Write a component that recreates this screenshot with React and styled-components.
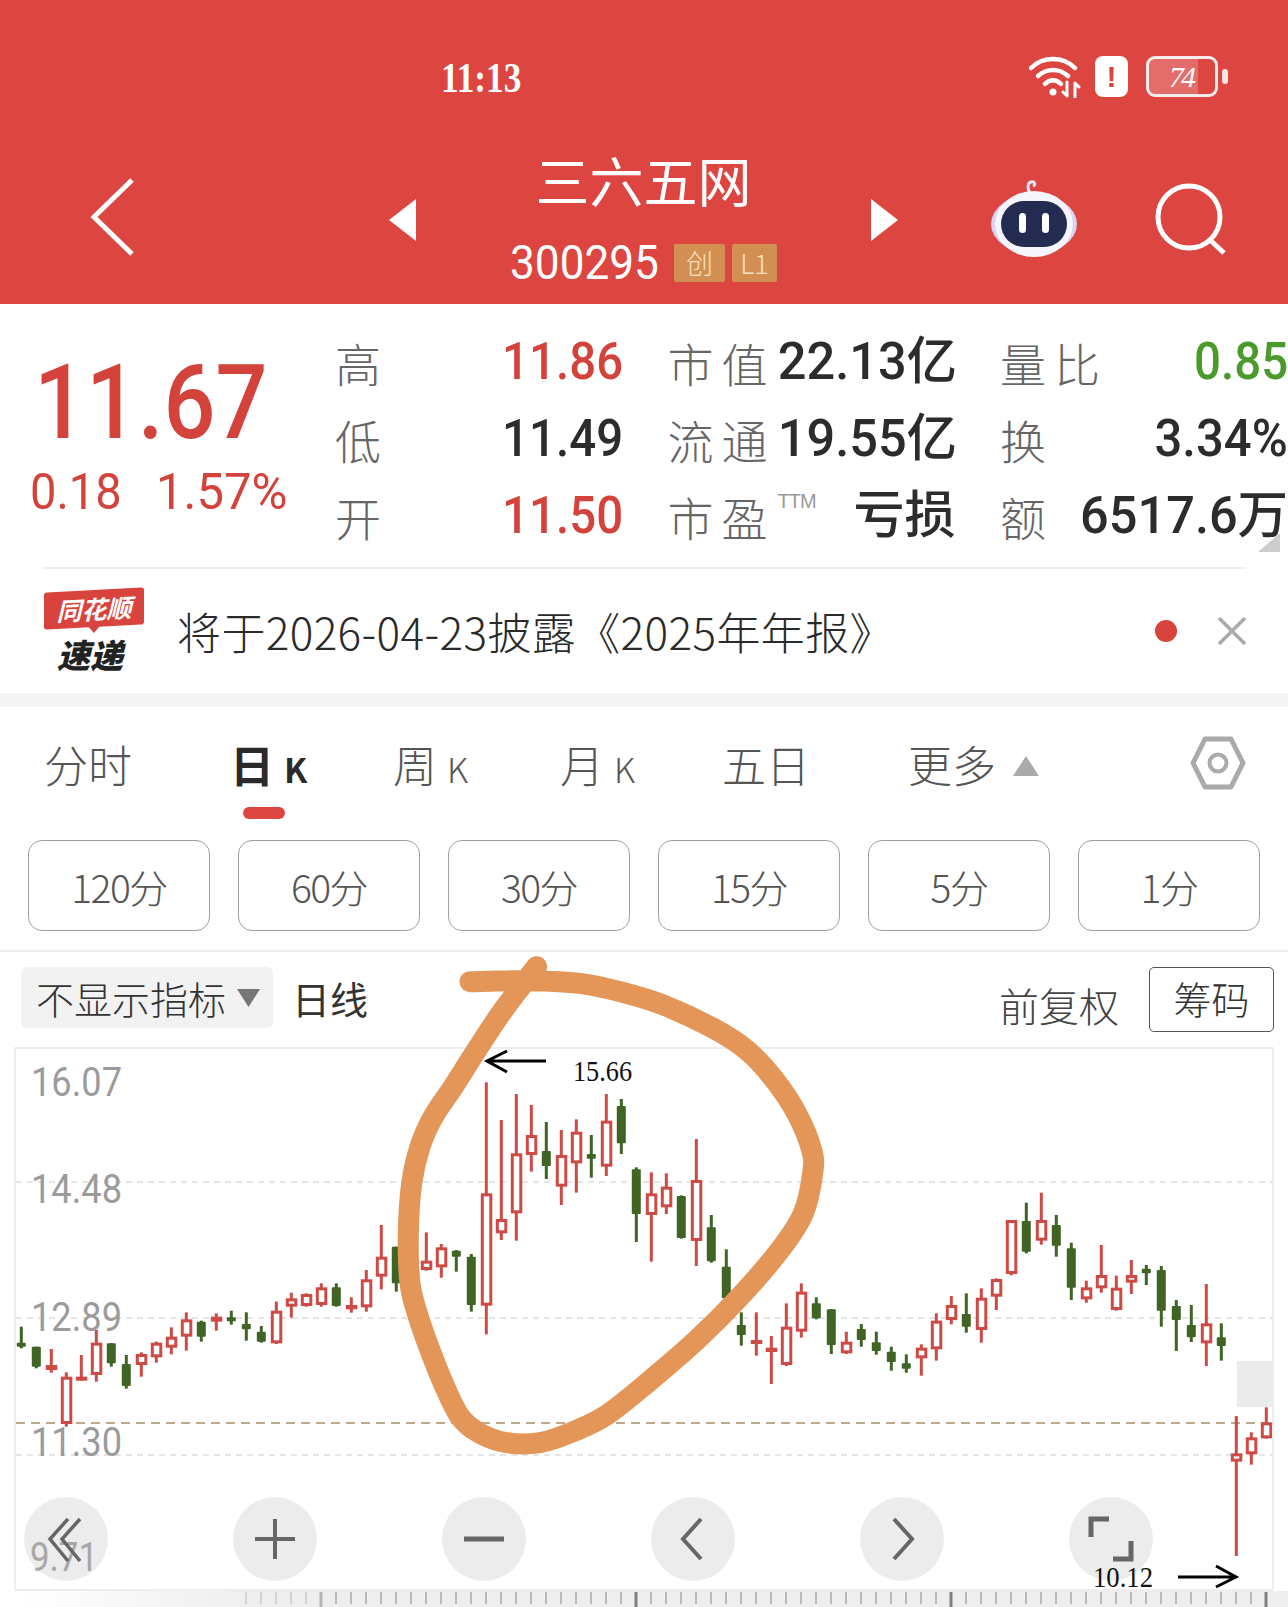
import React from "react"
import styled, { createGlobalStyle } from "styled-components"

const NUM_FONT = `"Roboto", "Noto Sans CJK SC", sans-serif`
const CJK_FONT = `"Noto Sans CJK SC", "Liberation Sans", sans-serif`
const RED = "#dc4540"
const PRICE_RED = "#d4423c"
const GREEN_TEXT = "#4a9a2c"
const CANDLE_RED = "#cd4a45"
const CANDLE_GREEN = "#3f6424"

const Global = createGlobalStyle`
  html, body { margin: 0; padding: 0; background: #fff; }
  * { box-sizing: border-box; }
`

const Page = styled.div`
  position: relative;
  width: 1288px;
  height: 1607px;
  overflow: hidden;
  background: #fff;
  font-family: ${CJK_FONT};
`

// digits in the reference are a narrow face, so squeeze them
const Narrow = styled.span`
  display: inline-block;
  white-space: nowrap;
  transform: scaleX(${(p) => p.$x || 0.93});
  transform-origin: ${(p) => p.$origin || "right"} center;
`

/* header */
const Header = styled.header`
  height: 304px;
  background: ${RED};
  color: #fff;
`
const StatusBar = styled.div`
  height: 150px;
  padding: 56px 70px 0 441px;
  display: flex;
  justify-content: space-between;
  align-items: flex-start;
`
const Time = styled(Narrow)`
  font: 700 42px/41px "Liberation Serif", serif;
  width: 107px;
  margin-top: 2px;
`
const StatusIcons = styled.div`
  display: flex;
  align-items: center;
  height: 41px;
  gap: 14px;
`
const AlertBadge = styled.div`
  width: 33px;
  height: 41px;
  margin-right: 4px;
  border-radius: 8px;
  background: #fff;
  color: ${RED};
  font: 900 30px/41px "Liberation Sans", sans-serif;
  text-align: center;
`
const Battery = styled.div`
  position: relative;
  width: 72px;
  height: 41px;
  border: 3px solid rgba(255, 255, 255, 0.9);
  border-radius: 9px;
  overflow: visible;
  &::after {
    content: "";
    position: absolute;
    right: -13px;
    top: 10px;
    width: 6px;
    height: 15px;
    border-radius: 3px;
    background: rgba(255, 255, 255, 0.85);
  }
`
const BatteryFill = styled.div`
  height: 100%;
  border-radius: 5px 0 0 5px;
  background: rgba(255, 255, 255, 0.22);
  color: #fff;
  padding-left: 20px;
  letter-spacing: -3px;
  font: italic 400 30px/35px "Liberation Serif", serif;
`
const NavBar = styled.div`
  display: grid;
  grid-template-columns: 389px 27px 455px 27px 1fr;
  align-items: center;
  height: 154px;
`
const BackCell = styled.div`
  padding-left: 88px;
  display: flex;
  margin-top: -20px;
`
const NavArrow = styled.svg`
  display: block;
  margin-top: -14px;
`
const TitleBlock = styled.div`
  display: flex;
  flex-direction: column;
  align-items: center;
  margin-top: -21px;
`
const Title = styled.div`
  font-size: 54px;
  line-height: 66px;
  font-weight: 400;
`
const CodeRow = styled.div`
  display: flex;
  align-items: center;
  height: 46px;
  gap: 7px;
  margin-top: 27px;
`
const Code = styled(Narrow)`
  font: 400 48px/46px ${NUM_FONT};
  transform-origin: left center;
  width: 157px;
`
const Tag = styled.span`
  width: ${(p) => p.$w}px;
  height: 38px;
  border-radius: 2px;
  background: #d38f52;
  color: #f7e3c4;
  font-size: 27px;
  font-weight: 300;
  line-height: 38px;
  text-align: center;
`
const NavTools = styled.div`
  display: flex;
  align-items: center;
  gap: 78px;
  padding-left: 93px;
  margin-top: -16px;
`

/* quote */
const Quote = styled.section`
  height: 263px;
  padding-top: 19px;
  display: flex;
  position: relative;
`
const PriceBlock = styled.div`
  width: 335px;
  padding-left: 30px;
`
const Price = styled(Narrow)`
  font: 500 104px/104px ${NUM_FONT};
  color: ${PRICE_RED};
  transform-origin: left center;
  margin: 28px 0 0 4px;
  display: block;
`
const Change = styled.div`
  display: flex;
  gap: 40px;
  font: 400 50px/50px ${NUM_FONT};
  color: ${PRICE_RED};
  margin-top: 12px;
  height: 50px;
`
const ChangeItem = styled(Narrow)`
  transform-origin: left center;
  width: ${(p) => p.$w}px;
`
const Stats = styled.div`
  display: grid;
  grid-template-columns: repeat(3, 285px);
  grid-auto-rows: 77px;
  column-gap: 47.5px;
`
const Stat = styled.div`
  display: flex;
  align-items: center;
  justify-content: space-between;
  margin-right: -3px;
`
const StatLabel = styled.span`
  font-size: 46px;
  font-weight: 300;
  color: #666;
  letter-spacing: ${(p) => p.$spread || 0}px;
  white-space: nowrap;
  position: relative;
`
const Ttm = styled.span`
  position: absolute;
  left: 110px;
  top: 6px;
  font: 300 20px/24px "Liberation Sans", sans-serif;
  letter-spacing: -1px;
  color: #999;
`
const StatValue = styled(Narrow)`
  font: 500 51px/60px ${NUM_FONT};
  color: ${(p) => p.$color || "#2c2c2c"};
`
const CornerFold = styled.div`
  position: absolute;
  right: 8px;
  bottom: 15px;
  width: 0;
  height: 0;
  border-left: 22px solid transparent;
  border-bottom: 19px solid #ccc;
`

/* news strip */
const News = styled.section`
  height: 126px;
  margin: 0 42px;
  border-top: 2px solid #eee;
  display: flex;
  align-items: center;
  position: relative;
`
const Logo = styled.div`
  width: 104px;
  display: flex;
  flex-direction: column;
  align-items: center;
  margin-right: 31px;
`
const LogoTop = styled.div`
  position: relative;
  width: 100px;
  height: 37px;
  border-radius: 3px;
  background: #d9433d;
  color: #fff;
  font-size: 25px;
  font-weight: 700;
  font-style: italic;
  line-height: 37px;
  text-align: center;
  transform: skewY(-3deg);
  &::after {
    content: "";
    position: absolute;
    left: 44px;
    bottom: -6px;
    border-top: 7px solid #d9433d;
    border-left: 6px solid transparent;
    border-right: 6px solid transparent;
  }
`
const LogoBottom = styled.div`
  margin: 9px 8px 0 0;
  color: #222;
  font-size: 33px;
  font-weight: 900;
  font-style: italic;
  line-height: 36px;
`
const NewsText = styled.div`
  flex: 1;
  font-size: 44px;
  font-weight: 300;
  color: #2a2a2a;
  letter-spacing: 0.4px;
  white-space: nowrap;
`
const NewsDot = styled.span`
  width: 22px;
  height: 22px;
  border-radius: 50%;
  background: #d9433d;
  margin-right: 41px;
`
const Band = styled.div`
  height: 14px;
  background: #f5f5f5;
`

/* period tabs */
const Tabs = styled.nav`
  height: 133px;
  padding: 25px 42px 0 44px;
  display: flex;
  align-items: flex-start;
`
const Tab = styled.div`
  position: relative;
  width: ${(p) => p.$w}px;
  font-size: 44px;
  line-height: 64px;
  font-weight: ${(p) => (p.$active ? 700 : 300)};
  color: ${(p) => (p.$active ? "#2a2a2a" : "#555")};
  white-space: nowrap;
  small {
    font-size: 34px;
    margin-left: 10px;
  }
  ${(p) =>
    p.$active &&
    `&::after {
      content: "";
      position: absolute;
      left: 13px;
      top: 75px;
      width: 42px;
      height: 12px;
      border-radius: 6px;
      background: ${RED};
    }`}
`
const MoreArrow = styled.svg`
  margin-left: 17px;
  vertical-align: 7px;
`
const SettingsIcon = styled.svg`
  margin-left: auto;
  margin-top: 4px;
`

const Periods = styled.div`
  display: grid;
  grid-template-columns: repeat(6, 182px);
  column-gap: 28px;
  padding: 0 28px;
  height: 112px;
  border-bottom: 2px solid #eee;
`
const PeriodButton = styled.div`
  height: 91px;
  border: 1.5px solid #a0a0a0;
  border-radius: 14px;
  display: flex;
  align-items: center;
  justify-content: center;
  font-size: 39px;
  font-weight: 300;
  letter-spacing: -1.5px;
  color: #555;
`

/* chart header */
const ChartBar = styled.div`
  height: 95px;
  padding: 15px 14px 0 21px;
  display: flex;
  align-items: flex-start;
`
const IndicatorSelect = styled.div`
  width: 252px;
  height: 61px;
  padding-left: 15px;
  border-radius: 6px;
  background: #f2f2f2;
  display: flex;
  align-items: center;
  gap: 11px;
  font-size: 38px;
  font-weight: 300;
  color: #333;
  white-space: nowrap;
`
const DayLabel = styled.div`
  margin-left: 19px;
  font-size: 38px;
  line-height: 61px;
  font-weight: 400;
  color: #333;
`
const Adjust = styled.div`
  margin-left: auto;
  margin-top: 8px;
  font-size: 40px;
  line-height: 60px;
  font-weight: 300;
  color: #444;
`
const ChipButton = styled.div`
  margin-left: 30px;
  width: 125px;
  height: 65px;
  border: 1.5px solid #555;
  border-radius: 5px;
  font-size: 38px;
  font-weight: 300;
  line-height: 60px;
  text-align: center;
  color: #333;
`

/* chart */
const ChartFrame = styled.div`
  position: relative;
  margin: 0 14px;
  height: 544px;
  border: 2px solid #eee;
`
const ChartSvg = styled.svg`
  display: block;
`
const Controls = styled.div`
  position: absolute;
  left: 8px;
  bottom: 8px;
  width: 1129px;
  display: flex;
  justify-content: space-between;
`
const RoundButton = styled.div`
  width: 84px;
  height: 84px;
  border-radius: 50%;
  background: rgba(0, 0, 0, 0.075);
  display: flex;
  align-items: center;
  justify-content: center;
`
const Axis = styled.div`
  height: 16px;
  background: linear-gradient(90deg, #fff 20px, #eee 260px);
`
const Annotation = styled.svg`
  position: absolute;
  left: 0;
  top: 0;
  pointer-events: none;
`

// wick top, body top, body bottom, wick bottom, read off the reference
const RAW_LEFT = [
  ["g",830,878,890,895],["g",890,890,950,955],["r",897,945,960,968],["r",967,980,1122,1130],
  ["r",915,980,990,992],["r",840,878,975,995],["g",880,880,940,950],["g",915,942,1008,1016],
  ["r",907,912,945,980],["r",875,878,922,938],["r",832,860,893,913],["r",787,808,860,902],
  ["g",812,815,860,875],["r",790,800,815,842],["g",782,802,814,824],["g",787,822,838,872],
  ["g",828,845,875,878],["r",755,782,880,882],["r",728,745,770,803],["r",730,732,768,770],
  ["r",700,712,765,770],["g",700,712,768,770],["r",742,765,778,788],["r",660,688,772,785],
  ["r",525,620,680,718],["g",590,590,700,725],["r",590,630,670,700],["r",547,632,660,662],
  ["r",582,592,652,683],["g",600,602,620,665],["g",612,620,765,785],["r",97,430,767,853],
  ["r",210,507,550,570],["r",132,310,490,572],["r",165,255,315,365],["g",216,303,348,387],
  ["r",240,315,410,465],["r",208,245,340,428],["g",255,312,326,383],["r",132,212,350,378],
  ["g",147,168,280,312],["g",352,358,492,576],["r",367,430,495,635],["r",370,410,472,492],
  ["g",436,438,564,566],["r",267,390,573,648],["g",495,532,634,638],["g",598,650,745,770],
  ["g",787,825,855,887],["r",787,870,882,917],["r",858,893,906,1002],["r",760,830,945,948],
  ["r",700,725,845,863],["g",742,760,805,808],["g",778,778,885,912],
]
const RAW_RIGHT = [
  ["r",545,575,610,612],["g",522,537,570,590],["g",545,577,603,614],["g",590,605,636,662],
  ["g",613,640,656,668],["r",583,593,625,677],["r",490,512,598,632],["r",438,465,510,523],
  ["g",430,492,530,548],["r",415,443,540,578],["r",385,387,440,480],["r",210,210,372,376],
  ["g",158,213,305,310],["r",128,210,272,284],["g",195,225,287,320],["g",278,295,413,450],
  ["r",392,412,448,458],["r",285,375,415,428],["r",377,413,480,482],["r",330,375,398,432],
  ["g",345,356,370,405],["g",348,360,482,530],["g",450,468,510,603],["g",465,525,562,576],
  ["r",402,520,580,648],["g",520,562,588,632],["r",798,910,935,1218],["r",847,862,913,944],
  ["r",772,817,865,866],
]
const toCandle = (base) => ([c, wt, bt, bb, wb]) => ({
  color: c,
  wt: base + wt / 3,
  bt: base + bt / 3,
  bb: base + bb / 3,
  wb: base + wb / 3,
})
const CANDLES = [...RAW_LEFT.map(toCandle(1050)), ...RAW_RIGHT.map(toCandle(1150))]

// center line of the marker stroke, in crop coords of a 3x zoom at (380, 950)
const LOOP = [
  [270,95],[450,92],[600,100],[720,125],[850,165],[1000,235],[1100,300],[1180,385],[1250,490],[1295,600],
  [1298,670],[1270,790],[1200,900],[1080,1040],[950,1170],[800,1300],[680,1395],[580,1445],[480,1478],[380,1478],
  [300,1450],[240,1400],[190,1300],[150,1200],[115,1100],[90,1000],[85,850],[95,700],[120,590],[160,500],
  [220,410],[290,300],[370,180],[470,50],
].map(([x, y]) => [380 + x / 3, 950 + y / 3])

// catmull-rom through the hand drawn points
const smooth = (pts) => {
  let d = `M${pts[0][0]} ${pts[0][1]}`
  for (let i = 0; i < pts.length - 1; i++) {
    const p0 = pts[i - 1] || pts[i]
    const p1 = pts[i]
    const p2 = pts[i + 1]
    const p3 = pts[i + 2] || p2
    d += ` C${p1[0] + (p2[0] - p0[0]) / 6} ${p1[1] + (p2[1] - p0[1]) / 6} ${p2[0] - (p3[0] - p1[0]) / 6} ${p2[1] - (p3[1] - p1[1]) / 6} ${p2[0]} ${p2[1]}`
  }
  return d
}

const Candle = ({ x, c }) => {
  const fill = c.color === "r" ? CANDLE_RED : CANDLE_GREEN
  return (
    <g>
      <rect x={x - 1.5} y={c.wt} width={3} height={c.wb - c.wt} fill={fill} />
      {c.color === "r" ? (
        <rect x={x - 4} y={c.bt + 1.5} width={8.5} height={Math.max(c.bb - c.bt - 3, 1)} fill="#fff" stroke={fill} strokeWidth={3} />
      ) : (
        <rect x={x - 4.5} y={c.bt} width={9} height={c.bb - c.bt} fill={fill} rx={1} />
      )}
    </g>
  )
}

const AXIS_LABELS = [
  ["16.07", 1096],
  ["14.48", 1203],
  ["12.89", 1331],
  ["11.30", 1456],
]

const Chart = () => (
  <ChartSvg width="1256" height="540" viewBox="16 1049 1256 540">
    <g stroke="#ddd" strokeWidth="1.5" strokeDasharray="6 5">
      <line x1="16" x2="1272" y1="1182" y2="1182" />
      <line x1="16" x2="1272" y1="1318" y2="1318" />
      <line x1="16" x2="1272" y1="1455" y2="1455" />
    </g>
    <line x1="16" x2="1272" y1="1423" y2="1423" stroke="#bfa98c" strokeWidth="2" strokeDasharray="9 6" />
    <rect x="1237" y="1361" width="36" height="46" fill="#ebebeb" />
    {AXIS_LABELS.map(([t, y]) => (
      <text key={t} x="31" y={y} fontFamily="Roboto, sans-serif" fontSize="40" fill="#9b9b9b" textLength="91" lengthAdjust="spacingAndGlyphs">
        {t}
      </text>
    ))}
    <text x="30" y="1571" fontFamily="Roboto, sans-serif" fontSize="40" fill="#b5b5b5" textLength="68" lengthAdjust="spacingAndGlyphs">
      9.71
    </text>
    {CANDLES.map((c, i) => (
      <Candle key={i} x={21.3 + 15 * i} c={c} />
    ))}
  </ChartSvg>
)

const Icon = ({ children }) => (
  <svg width="48" height="48" viewBox="0 0 48 48" fill="none" stroke="#666" strokeWidth="4">
    {children}
  </svg>
)

const AxisTicks = () => {
  const ticks = []
  for (let x = 1266; x >= 245; x -= 15) {
    const major = (1266 - x) % 315 === 0
    ticks.push(
      <rect key={x} x={x - (major ? 1.5 : 0.75)} y={1} width={major ? 3 : 1.5} height={major ? 15 : 12} fill={major ? "#808080" : "#a8a8a8"} opacity={x < 330 ? 0.5 : 1} />
    )
  }
  return (
    <svg width="1288" height="16" viewBox="0 0 1288 16" style={{ display: "block" }}>
      {ticks}
    </svg>
  )
}

export default function App() {
  return (
    <Page>
      <Global />
      <Header>
        <StatusBar>
          <Time $x={0.84} $origin="left">11:13</Time>
          <StatusIcons>
            <svg width="52" height="42" viewBox="0 0 52 42" fill="none" stroke="#fff" strokeLinecap="round">
              <path d="M2 12 C14 0 34 0 46 12" strokeWidth="4.5" />
              <path d="M9 20 C18 12 30 12 39 20" strokeWidth="4.5" />
              <path d="M16 28 C21 23 27 23 32 28" strokeWidth="4.5" />
              <circle cx="24" cy="36" r="3.5" fill="#fff" stroke="none" />
              <path d="M38 26 V40 M34 36 L38 40 M46 41 V27 M46 27 L50 31" strokeWidth="3" />
            </svg>
            <AlertBadge>!</AlertBadge>
            <Battery>
              <BatteryFill style={{ width: "74%" }}>74</BatteryFill>
            </Battery>
          </StatusIcons>
        </StatusBar>
        <NavBar>
          <BackCell>
            <svg width="48" height="80" viewBox="0 0 48 80" fill="none" stroke="#fff" strokeWidth="5">
              <path d="M44 3 L6 40 L44 77" />
            </svg>
          </BackCell>
          <NavArrow width="27" height="42" viewBox="0 0 27 42">
            <path d="M27 0 V42 L0 21 Z" fill="#fff" />
          </NavArrow>
          <TitleBlock>
            <Title>三六五网</Title>
            <CodeRow>
              <Code $x={0.92}>300295</Code>
              <Tag $w={51}>创</Tag>
              <Tag $w={45}>L1</Tag>
            </CodeRow>
          </TitleBlock>
          <NavArrow width="27" height="42" viewBox="0 0 27 42">
            <path d="M0 0 V42 L27 21 Z" fill="#fff" />
          </NavArrow>
          <NavTools>
            <svg width="86" height="78" viewBox="0 0 86 78">
              <path d="M40 14 C36 10 36 3 40 2 C44 1 45 5 42 6" fill="none" stroke="#e8e4f8" strokeWidth="3" />
              <ellipse cx="43" cy="44" rx="43" ry="30" fill="#d8d3f3" />
              <ellipse cx="43" cy="44" rx="39" ry="33" fill="#f6f5fc" />
              <rect x="10" y="21" width="66" height="46" rx="23" fill="#232c50" />
              <rect x="28" y="33" width="7" height="20" rx="3.5" fill="#fff" />
              <rect x="51" y="33" width="7" height="20" rx="3.5" fill="#fff" />
            </svg>
            <svg width="72" height="72" viewBox="0 0 72 72" fill="none" stroke="#fff" strokeWidth="5">
              <circle cx="34" cy="34" r="31" />
              <path d="M54 56 L69 70" />
            </svg>
          </NavTools>
        </NavBar>
      </Header>

      <Quote>
        <PriceBlock>
          <Price $x={0.88}>11.67</Price>
          <Change>
            <ChangeItem $w={86} $x={0.94}>0.18</ChangeItem>
            <ChangeItem $w={140} $x={0.98}>1.57%</ChangeItem>
          </Change>
        </PriceBlock>
        <Stats>
          <Stat><StatLabel>高</StatLabel><StatValue $color={PRICE_RED}>11.86</StatValue></Stat>
          <Stat><StatLabel $spread={8}>市值</StatLabel><StatValue $x={0.99}>22.13亿</StatValue></Stat>
          <Stat><StatLabel $spread={8}>量比</StatLabel><StatValue $color={GREEN_TEXT}>0.85</StatValue></Stat>
          <Stat><StatLabel>低</StatLabel><StatValue>11.49</StatValue></Stat>
          <Stat><StatLabel $spread={8}>流通</StatLabel><StatValue $x={0.99}>19.55亿</StatValue></Stat>
          <Stat><StatLabel>换</StatLabel><StatValue $x={0.96}>3.34%</StatValue></Stat>
          <Stat><StatLabel>开</StatLabel><StatValue $color={PRICE_RED}>11.50</StatValue></Stat>
          <Stat>
            <StatLabel $spread={8}>市盈<Ttm>TTM</Ttm></StatLabel>
            <StatValue $x={1}>亏损</StatValue>
          </Stat>
          <Stat><StatLabel>额</StatLabel><StatValue $x={0.99}>6517.6万</StatValue></Stat>
        </Stats>
        <CornerFold />
      </Quote>

      <News>
        <Logo>
          <LogoTop>同花顺</LogoTop>
          <LogoBottom>速递</LogoBottom>
        </Logo>
        <NewsText>将于2026-04-23披露《2025年年报》</NewsText>
        <NewsDot />
        <svg width="28" height="28" viewBox="0 0 28 28" stroke="#aaa" strokeWidth="3.5">
          <path d="M1 1 L27 27 M27 1 L1 27" />
        </svg>
      </News>
      <Band />

      <Tabs>
        <Tab $w={186}>分时</Tab>
        <Tab $w={163} $active>日<small>K</small></Tab>
        <Tab $w={167}>周<small>K</small></Tab>
        <Tab $w={162}>月<small>K</small></Tab>
        <Tab $w={186}>五日</Tab>
        <Tab $w={140}>
          更多
          <MoreArrow width="26" height="20" viewBox="0 0 26 20"><path d="M13 0 L26 20 H0 Z" fill="#aaa" /></MoreArrow>
        </Tab>
        <SettingsIcon width="56" height="54" viewBox="0 0 56 54" fill="none" stroke="#aaa">
          <path d="M15 3 H41 L53 27 L41 51 H15 L3 27 Z" strokeWidth="5" strokeLinejoin="round" />
          <circle cx="28" cy="27" r="8.5" strokeWidth="4" />
        </SettingsIcon>
      </Tabs>

      <Periods>
        {["120分", "60分", "30分", "15分", "5分", "1分"].map((t) => (
          <PeriodButton key={t}>{t}</PeriodButton>
        ))}
      </Periods>

      <ChartBar>
        <IndicatorSelect>
          不显示指标
          <svg width="23" height="18" viewBox="0 0 23 18"><path d="M0 0 H23 L11.5 18 Z" fill="#777" /></svg>
        </IndicatorSelect>
        <DayLabel>日线</DayLabel>
        <Adjust>前复权</Adjust>
        <ChipButton>筹码</ChipButton>
      </ChartBar>

      <ChartFrame>
        <Chart />
        <Controls>
          <RoundButton>
            <Icon><path d="M26 4 L8 24 L26 46 M38 4 L20 24 L38 46" strokeWidth="3.5" /></Icon>
          </RoundButton>
          <RoundButton>
            <Icon><path d="M24 4 V44 M4 24 H44" /></Icon>
          </RoundButton>
          <RoundButton>
            <Icon><path d="M4 24 H44" strokeWidth="5" /></Icon>
          </RoundButton>
          <RoundButton>
            <Icon><path d="M32 4 L14 24 L32 44" /></Icon>
          </RoundButton>
          <RoundButton>
            <Icon><path d="M16 4 L34 24 L16 44" /></Icon>
          </RoundButton>
          <RoundButton>
            <Icon><path d="M22 4 H4 V22 M44 26 V44 H26" strokeWidth="5" /></Icon>
          </RoundButton>
        </Controls>
      </ChartFrame>
      <Axis><AxisTicks /></Axis>

      {/* the hand drawn marks sit on top of everything */}
      <Annotation width="1288" height="1607" viewBox="0 0 1288 1607">
        <path d={smooth(LOOP)} fill="none" stroke="#e39657" strokeWidth="21" strokeLinecap="round" strokeLinejoin="round" />
        <g fill="none" stroke="#000" strokeWidth="3">
          <path d="M546 1061 H488 M507 1051 L487 1061 L507 1072" />
          <path d="M1178 1577 H1236 M1216 1566 L1236 1577 L1216 1587" />
        </g>
        <text x="573" y="1081" fontFamily="'Liberation Serif', serif" fontSize="30" fill="#111" textLength="59" lengthAdjust="spacingAndGlyphs">15.66</text>
        <text x="1093" y="1587" fontFamily="'Liberation Serif', serif" fontSize="30" fill="#111" textLength="60" lengthAdjust="spacingAndGlyphs">10.12</text>
      </Annotation>
    </Page>
  )
}
